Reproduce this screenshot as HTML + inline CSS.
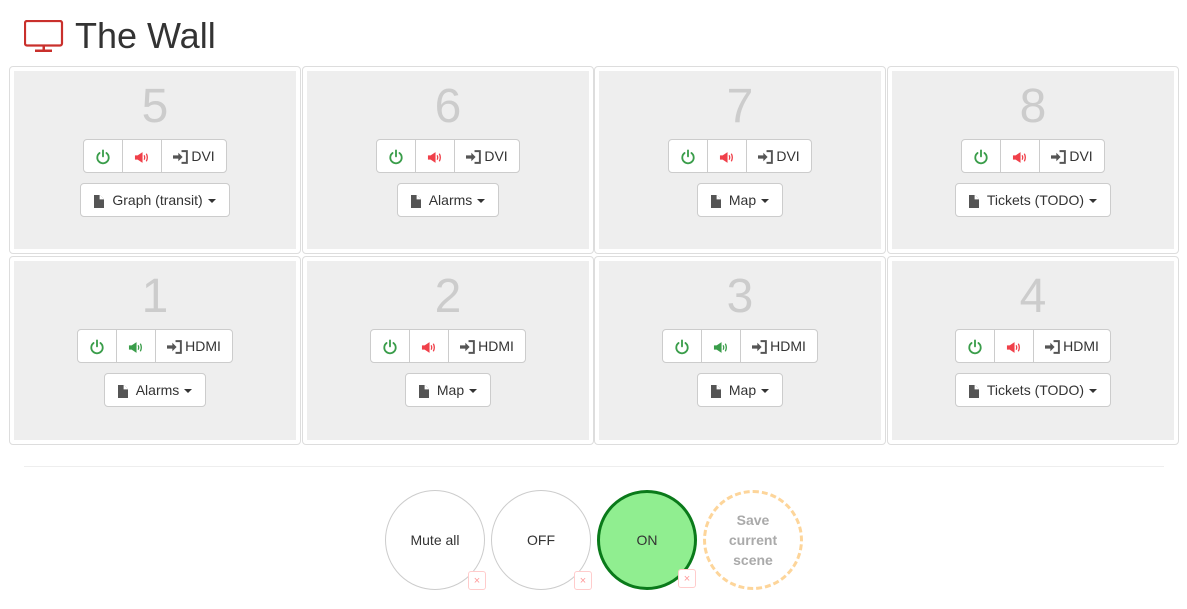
<!DOCTYPE html>
<html><head><style>
body{margin:0;width:1187px;height:609px;background:#fff;font-family:"Liberation Sans",sans-serif;color:#333;position:relative;overflow:hidden}
h1{position:absolute;left:75px;top:14px;margin:0;font-size:36px;font-weight:400;line-height:44px}
.mon{position:absolute;left:24px;top:20px}
.cell{position:absolute;width:292px;height:187px;border:1px solid #ddd;border-radius:4px;box-sizing:border-box;padding:4px}
.in{background:#eee;height:100%;text-align:center;position:relative}
.num{position:absolute;top:10px;left:0;right:0;font-size:48px;line-height:52px;color:#ccc}
.grp{position:absolute;top:68px;left:0;right:0;font-size:0}
.b{display:inline-block;height:34px;line-height:32px;box-sizing:border-box;border:1px solid #ccc;background:#fff;font-size:14px;vertical-align:top;border-radius:0;margin-left:-1px;padding:0 11px}
.b:first-child{border-radius:4px 0 0 4px;margin-left:0}
.b:last-child{border-radius:0 4px 4px 0}
.b svg{vertical-align:middle}
.dd{position:absolute;top:112px;left:0;right:0;font-size:0}
.dd .b{border-radius:4px;padding:0 13px}
.caret{display:inline-block;width:0;height:0;border-left:4px solid transparent;border-right:4px solid transparent;border-top:4px solid #333;vertical-align:middle;margin-left:5px}
hr{position:absolute;left:24px;width:1140px;top:466px;margin:0;border:0;border-top:1px solid #eee}
.c{position:absolute;top:490px;width:100px;height:100px;border-radius:50%;box-sizing:border-box;border:1px solid #ccc;display:flex;align-items:center;justify-content:center;text-align:center;font-size:14px;line-height:20px}
.x{position:absolute;width:18px;height:19px;border:1px solid #fcc;border-radius:3px;background:#fff;color:#f99;font-size:11px;line-height:18px;text-align:center;box-sizing:border-box}
</style></head><body>
<svg class="mon" width="40" height="34" viewBox="0 0 40 34"><rect x="1" y="1" width="37" height="24.5" rx="2" fill="none" stroke="#c9302c" stroke-width="2.2"/><rect x="18.5" y="26" width="2.5" height="4" fill="#c9302c"/><rect x="11" y="29.5" width="17" height="2.5" fill="#c9302c"/></svg>
<h1>The Wall</h1>
<div id="cells"></div>
<hr>
<div class="c" style="left:385px">Mute all</div>
<div class="c" style="left:491px">OFF</div>
<div class="c" style="left:597px;border:3px solid #0a7a1a;background:#90ee90">ON</div>
<div class="c" style="left:703px;border:3px dashed #fdd59a;color:#aaa;font-weight:bold">Save<br>current<br>scene</div>
<div class="x" style="left:468px;top:571px">×</div>
<div class="x" style="left:574px;top:571px">×</div>
<div class="x" style="left:678px;top:569px">×</div>
<script>
var P='<svg width="16" height="16" viewBox="0 0 14 14"><path d="M4 3.5A5 5 0 1 0 10 3.5" fill="none" stroke="#3a9d4a" stroke-width="1.6" stroke-linecap="round"/><path d="M7 1.2V6.5" stroke="#3a9d4a" stroke-width="1.6" stroke-linecap="round"/></svg>';
function V(c){return '<svg width="16" height="13" viewBox="0 0 14 12"><path d="M0.5 4H3L7.5 1V11L3 8H0.5Z" fill="'+c+'"/><path d="M9 4Q10 6 9 8M11 2.5Q12.8 6 11 9.5" fill="none" stroke="'+c+'" stroke-width="1.2"/></svg>';}
var I='<svg width="16" height="14" viewBox="0 0 15 13" style="margin-right:2px"><path d="M0 5H5V2.5L9 6.5L5 10.5V8H0Z" fill="#555"/><path d="M8 1H13V12H8" fill="none" stroke="#555" stroke-width="1.8"/></svg>';
var F='<svg width="10" height="13" viewBox="0 0 10 13" style="margin-right:8px"><path d="M0 0H6L10 4V13H0Z" fill="#555"/><path d="M6 0V4H10" fill="#fff" stroke="#fff" stroke-width=".8"/></svg>';
var d=[[5,'r','DVI','Graph (transit)'],[6,'r','DVI','Alarms'],[7,'r','DVI','Map'],[8,'r','DVI','Tickets (TODO)'],[1,'g','HDMI','Alarms'],[2,'r','HDMI','Map'],[3,'g','HDMI','Map'],[4,'r','HDMI','Tickets (TODO)']];
var xs=[9,302,594,887],h='';
d.forEach(function(e,i){var x=xs[i%4],y=i<4?66:256;
h+='<div class="cell" style="left:'+x+'px;top:'+y+'px;height:'+(i<4?188:189)+'px"><div class="in"><div class="num">'+e[0]+'</div><div class="grp"><span class="b">'+P+'</span><span class="b">'+V(e[1]=='r'?'#f0404a':'#3a9d4a')+'</span><span class="b" style="padding:0 11px">'+I+e[2]+'</span></div><div class="dd"><span class="b">'+F+e[3]+'<span class="caret"></span></span></div></div></div>';});
document.getElementById('cells').innerHTML=h;
</script>
</body></html>
